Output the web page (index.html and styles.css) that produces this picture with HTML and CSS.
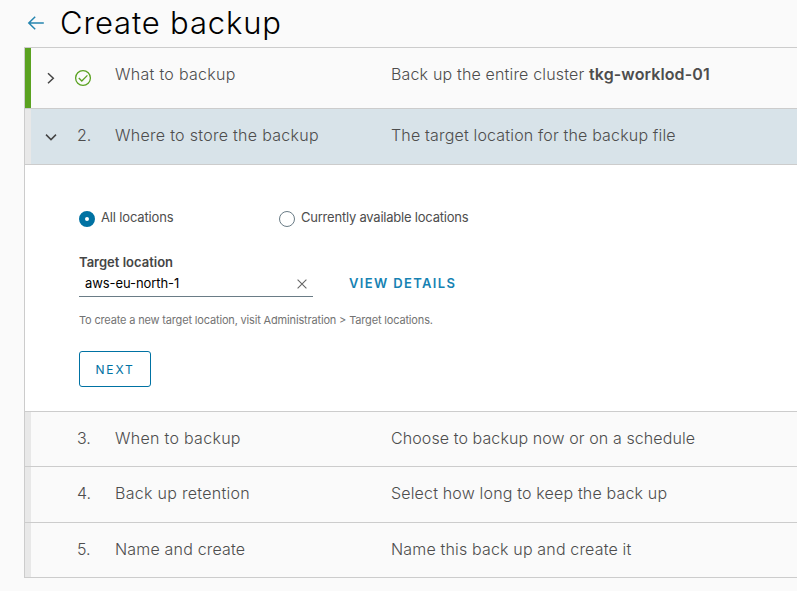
FILE: index.html
```html
<!DOCTYPE html>
<html lang="en">
<head>
<meta charset="utf-8">
<title>Create backup</title>
<link rel="stylesheet" href="styles.css">
</head>
<body>
<header class="page-header">
  <svg class="back" viewBox="0 0 18 16" width="18" height="16"><path d="M16.8 8H2M8.2 1.7L1.8 8l6.4 6.3"/></svg>
  <h1>Create backup</h1>
</header>
<main class="accordion">
  <section class="step done">
    <svg class="caret" viewBox="0 0 12 12" width="12" height="12"><path d="M3 1.2L8.3 6.2l-5.3 5"/></svg>
    <span class="num"><svg class="check" viewBox="0 0 18 18" width="18" height="18"><circle cx="9" cy="9" r="7.4"/><path d="M4.8 9l3 3 5.6-5.6"/></svg></span>
    <span class="title t1">What to backup</span>
    <span class="desc">Back up the entire cluster <b>tkg-worklod-01</b></span>
  </section>
  <section class="step active">
    <svg class="caret" viewBox="0 0 12 12" width="12" height="12"><path d="M1 3.6l5 5 5-5"/></svg>
    <span class="num">2.</span>
    <span class="title">Where to store the backup</span>
    <span class="desc">The target location for the backup file</span>
  </section>
  <section class="panel">
    <div class="radios">
      <label class="radio"><i class="dot on"></i><span class="near">All locations</span></label>
      <label class="radio"><i class="dot"></i><span>Currently available locations</span></label>
    </div>
    <div class="label">Target location</div>
    <div class="field-row">
      <div class="combo"><span class="value">aws-eu-north-1</span><svg viewBox="0 0 10 10" width="10" height="10"><path d="M.6.6l8.8 8.8M9.4.6L.6 9.4"/></svg></div>
      <a class="link">VIEW DETAILS</a>
    </div>
    <p class="help">To create a new target location, visit Administration &gt; Target locations.</p>
    <button class="next">NEXT</button>
  </section>
  <section class="step">
    <span class="caret"></span><span class="num">3.</span>
    <span class="title">When to backup</span>
    <span class="desc d3">Choose to backup now or on a schedule</span>
  </section>
  <section class="step fourth">
    <span class="caret"></span><span class="num">4.</span>
    <span class="title">Back up retention</span>
    <span class="desc">Select how long to keep the back up</span>
  </section>
  <section class="step">
    <span class="caret"></span><span class="num">5.</span>
    <span class="title t5">Name and create</span>
    <span class="desc">Name this back up and create it</span>
  </section>
</main>
</body>
</html>
```
FILE: styles.css
```css
* { box-sizing: border-box; }
body { margin: 0; height: 591px; overflow: hidden; background: #fafafa; color: #4d4d4d; font-family: Inter, "Open Sans", sans-serif; font-weight: 300; }
svg { fill: none; display: block; flex: none; }
.page-header { height: 47px; display: flex; padding: 0 0 0 27px; }
.back { margin: 15px 15px 0 0; stroke: #2685b0; stroke-width: 1.5; }
h1 { margin: 0; font-size: 31px; line-height: 46px; font-weight: 300; color: #000; white-space: nowrap; letter-spacing: .85px; }
.accordion { margin-left: 24px; border: 1px solid #ccc; border-right: 0; }
.step { height: 55px; border-bottom: 1px solid #ccc; box-shadow: inset 6px 0 #e8e8e8; display: flex; align-items: center; font-size: 16px; white-space: nowrap; padding: 0 0 2px 20px; }
.step:last-child { border-bottom: 0; height: 54px; }
.done { height: 61px; box-shadow: inset 6px 0 #5aa220; padding-bottom: 8px; }
.active { height: 56px; background: #d8e3e9; padding-bottom: 4px; }
.fourth { height: 56px; padding-bottom: 4px; }
.caret { width: 12px; margin-right: 20px; flex: none; stroke: #454545; stroke-width: 1.5; position: relative; top: 2px; }
.done .caret, .check { position: relative; top: 4px; }
.num { width: 38px; flex: none; }
.check { stroke: #5aa220; stroke-width: 1.3; left: -3px; }
.title { width: 276px; flex: none; letter-spacing: .29px; }
.t5 { letter-spacing: .18px; }
.desc { letter-spacing: .165px; }
.d3 { letter-spacing: .09px; }
b { font-weight: 600; letter-spacing: .11px; }
.panel { height: 247px; background: #fff; border-bottom: 1px solid #ccc; padding: 44px 0 0 54px; font-size: 13px; }
.radios { display: flex; height: 18px; }
.radio { display: flex; width: 200px; line-height: 16px; font-weight: 400; white-space: nowrap; letter-spacing: -.22px; }
.near { letter-spacing: -.15px; }
.dot { width: 16px; height: 16px; border: 1px solid #6a7c86; border-radius: 50%; margin: 2px 6px 0 0; flex: none; }
.dot.on { border: 6px solid #0072a3; background: #fff; }
.label { margin-top: 26px; line-height: 18px; font-weight: 600; color: #454545; }
.field-row { display: flex; height: 26px; }
.combo { width: 234px; border-bottom: 1px solid #6a7c86; padding: 0 6px; display: flex; justify-content: space-between; align-items: center; color: #000; font-weight: 400; letter-spacing: -.08px; }
.value { padding-bottom: 2px; }
.combo svg { stroke: #666; stroke-width: 1.1; }
.link { margin-left: 36px; line-height: 24px; font-weight: 600; color: #1682b3; letter-spacing: 1.35px; }
.help { margin: 14px 0 0; font-size: 11px; line-height: 18px; color: #737373; font-weight: 400; white-space: nowrap; letter-spacing: -.165px; }
.next { display: block; margin-top: 22px; width: 72px; height: 36px; border: 1px solid #0072a3; border-radius: 3px; background: #fff; color: #0072a3; font: 400 12px Inter, sans-serif; letter-spacing: 1.8px; padding: 0; }
```
